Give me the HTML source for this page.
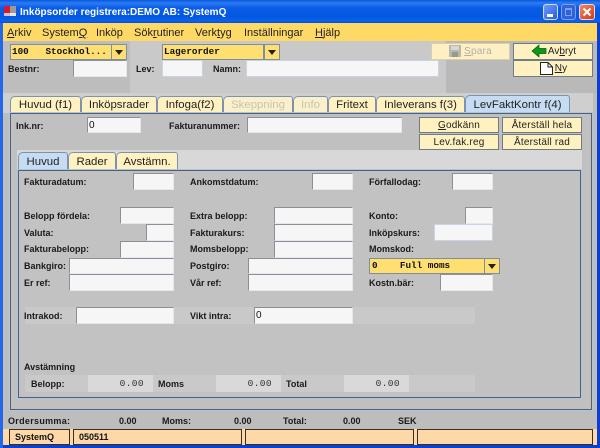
<!DOCTYPE html>
<html><head><meta charset="utf-8">
<style>
html,body{margin:0;padding:0;background:#c0c0c0}
#w{position:relative;width:600px;height:448px;overflow:hidden;background:#bdbdbd;font-family:"Liberation Sans",sans-serif;color:#111}
#w div,#w svg{position:absolute}
.l{font-size:9px;font-weight:bold;line-height:12px;white-space:nowrap;color:#1a1a1a}
.i{background:#f6f6f6;border:1px solid #a9b1bd;border-top-color:#8a8f98;border-left-color:#8a8f98;border-right-color:#e4e8ee;border-bottom-color:#e4e8ee;box-sizing:border-box;font-size:10px;line-height:16px;padding-left:1px}
.b{background:#fff2c0;border:1px solid #6f7c88;box-sizing:border-box;font-size:10px;line-height:15px;text-align:center;white-space:nowrap;color:#222;letter-spacing:.2px}
.t{background:#fff2c0;border:1px solid #7d93ad;border-bottom:none;border-radius:5px 3px 0 0;box-sizing:border-box;font-size:11.4px;line-height:17px;text-align:center;white-space:nowrap;color:#222}
.a{background:#c6dcf2}
.d{color:#c8c4ae}
.c{background:#ffdf70;border:1px solid #7f8da0;box-sizing:border-box;font-family:"Liberation Mono",monospace;font-weight:bold;font-size:9.3px;line-height:14px;padding-left:1px;white-space:pre;color:#111}
.cb{background:#ffdf70;border:1px solid #7f8da0;box-sizing:border-box}
.cb:after{content:"";position:absolute;left:3px;top:5px;border:4px solid transparent;border-top:5px solid #222;border-bottom:none}
.v{background:#d9d9d9;font-family:"Liberation Mono",monospace;font-size:9.5px;line-height:17px;text-align:right;padding-right:9px;box-sizing:border-box;color:#333;letter-spacing:.4px}
.s{background:#ffd8a8;border:1px solid #3a3020;box-sizing:border-box;font-size:9px;font-weight:bold;line-height:14px;padding-left:5px}
.m{top:26px;font-size:11px;line-height:14px;color:#222;white-space:nowrap}
u{text-decoration:underline}
</style></head><body>
<div id="w">
<!-- window frame -->
<div style="left:0;top:0;width:600px;height:448px;background:#0a3fd0"></div>
<div style="left:0;top:0;width:3px;height:448px;background:#2468ea"></div>
<div style="left:0;top:0;width:600px;height:23px;background:linear-gradient(#0a55dc 0,#2a7cf2 3px,#0a5ce6 8px,#0458e0 17px,#0a62ee 21px,#0650d0 23px)"></div>
<div style="left:3px;top:23px;width:594px;height:422px;background:#bdbdbd"></div>
<!-- title -->
<div style="left:4px;top:6px;width:6px;height:7px;background:#d81830"></div>
<div style="left:10px;top:6px;width:6px;height:7px;background:#9a9a9a"></div>
<div style="left:4px;top:13px;width:6px;height:3px;background:#c8c8c8"></div>
<div style="left:10px;top:13px;width:6px;height:3px;background:#e6e6e6"></div>
<div style="left:20px;top:6px;font-size:10px;font-weight:bold;line-height:14px;color:#fff;white-space:nowrap">Inköpsorder registrera:DEMO AB: SystemQ</div>
<!-- title buttons -->
<div style="left:543px;top:4px;width:15px;height:16px;box-sizing:border-box;border:1px solid #d0dcf8;border-radius:3px;background:linear-gradient(135deg,#6f9cf4,#2a5cdc)"></div>
<div style="left:547px;top:14px;width:6px;height:3px;background:#fff"></div>
<div style="left:561px;top:4px;width:15px;height:16px;box-sizing:border-box;border:1px solid #7fa0ec;border-radius:3px;background:#2f62dc"></div>
<div style="left:565px;top:8px;width:7px;height:8px;box-sizing:border-box;border:1px solid #7fa0ec;border-top-width:2px"></div>
<div style="left:579px;top:4px;width:16px;height:16px;box-sizing:border-box;border:1px solid #f0d8d0;border-radius:3px;background:linear-gradient(135deg,#ef8a68,#d03a18)"></div>
<svg style="left:579px;top:4px" width="16" height="16"><path d="M4.5 4.5L11.5 11.5M11.5 4.5L4.5 11.5" stroke="#fff" stroke-width="2"/></svg>
<!-- menu -->
<div style="left:3px;top:23px;width:594px;height:18px;background:#ffd966"></div>
<div class="m" style="left:7px"><u>A</u>rkiv</div>
<div class="m" style="left:42px">System<u>Q</u></div>
<div class="m" style="left:96px">Inköp</div>
<div class="m" style="left:134px">Sök<u>r</u>utiner</div>
<div class="m" style="left:195px">Verk<u>t</u>yg</div>
<div class="m" style="left:244px">Inställningar</div>
<div class="m" style="left:315px"><u>H</u>jälp</div>
<!-- top area -->
<div style="left:130px;top:41px;width:316px;height:52px;background:#c9c9c9"></div>
<div style="left:446px;top:41px;width:151px;height:52px;background:#b9b9b9"></div>
<div class="c" style="left:10px;top:44px;width:102px;height:16px">100   Stockhol...</div>
<div class="cb" style="left:111px;top:44px;width:16px;height:16px"></div>
<div class="c" style="left:162px;top:44px;width:102px;height:16px">Lagerorder</div>
<div class="cb" style="left:264px;top:44px;width:16px;height:16px"></div>
<div class="l" style="left:8px;top:63px">Bestnr:</div>
<div class="i" style="left:73px;top:60px;width:54px;height:17px"></div>
<div class="l" style="left:136px;top:63px">Lev:</div>
<div class="i" style="left:162px;top:60px;width:41px;height:17px;border-color:#c8d4e4"></div>
<div class="l" style="left:213px;top:63px">Namn:</div>
<div class="i" style="left:246px;top:60px;width:193px;height:17px;border-color:#c8d4e4"></div>
<div class="b d" style="left:431px;top:43px;width:79px;height:17px;background:#fff0c4;border-color:#d8d0ac;padding-left:15px;color:#b0b0a8"><u>S</u>para</div>
<svg style="left:449px;top:45px" width="12" height="12"><rect width="12" height="12" fill="#b8b8b0"/><rect x="2" y="1" width="8" height="4" fill="#d8d8d0"/><rect x="3" y="7" width="6" height="5" fill="#989890"/></svg>
<div class="b" style="left:513px;top:43px;width:80px;height:17px;padding-left:18px;letter-spacing:0"><span>Av<u>b</u>ryt</span></div>
<svg style="left:531px;top:44px" width="16" height="14"><path d="M1 7L8 1V4.5H15V9.5H8V13Z" fill="#0a9a18" stroke="#045c0c" stroke-width=".7"/></svg>
<div class="b" style="left:513px;top:60px;width:80px;height:17px;padding-left:16px"><u>N</u>y</div>
<svg style="left:540px;top:62px" width="13" height="13"><path d="M.5.5H8L12.5 5V12.5H.5Z" fill="#fff" stroke="#222"/><path d="M8 .5V5H12.5" fill="none" stroke="#222"/></svg>
<!-- outer tabs -->
<div style="left:3px;top:93px;width:590px;height:20px;background:#cfcfcf"></div>
<div class="t" style="left:10px;top:96px;width:71px;height:17px">Huvud (f1)</div>
<div class="t" style="left:81px;top:96px;width:76px;height:17px">Inköpsrader</div>
<div class="t" style="left:157px;top:96px;width:66px;height:17px">Infoga(f2)</div>
<div class="t d" style="left:223px;top:96px;width:70px;height:17px;background:#fbf0cc">Skeppning</div>
<div class="t d" style="left:293px;top:96px;width:35px;height:17px;background:#fbf0cc">Info</div>
<div class="t" style="left:328px;top:96px;width:48px;height:17px">Fritext</div>
<div class="t" style="left:376px;top:96px;width:89px;height:17px">Inleverans f(3)</div>
<div class="t a" style="left:465px;top:95px;width:105px;height:18px;line-height:19px">LevFaktKontr f(4)</div>
<!-- outer panel -->
<div style="left:9px;top:112px;width:584px;height:299px;box-sizing:border-box;border:1px solid #a9c6e6;background:#c0c0c0"></div>
<div style="left:10px;top:113px;width:582px;height:297px;box-sizing:border-box;border:1px solid #55606c;background:#c0c0c0"></div>
<!-- inner tab band -->
<div style="left:17px;top:150px;width:565px;height:20px;background:#d8d8d8"></div>
<div class="l" style="left:16px;top:120px">Ink.nr:</div>
<div class="i" style="left:87px;top:117px;width:54px;height:16px;line-height:15px">0</div>
<div class="l" style="left:169px;top:120px">Fakturanummer:</div>
<div class="i" style="left:247px;top:117px;width:155px;height:16px"></div>
<div class="b" style="left:419px;top:117px;width:80px;height:16px">
<u>G</u>odkänn</div>
<div class="b" style="left:502px;top:117px;width:80px;height:16px">Återställ hela</div>
<div class="b" style="left:419px;top:134px;width:80px;height:16px">Lev.fak.reg</div>
<div class="b" style="left:502px;top:134px;width:80px;height:16px">Återställ rad</div>
<!-- inner tabs -->
<div class="t a" style="left:18px;top:152px;width:50px;height:18px;line-height:18px">Huvud</div>
<div class="t" style="left:68px;top:152px;width:48px;height:18px;line-height:18px">Rader</div>
<div class="t" style="left:116px;top:152px;width:62px;height:18px;line-height:18px">Avstämn.</div>
<!-- inner panel -->
<div style="left:17px;top:169px;width:565px;height:230px;box-sizing:border-box;border:1px solid #a9c6e6;background:#c0c0c0"></div>
<div style="left:18px;top:170px;width:563px;height:228px;box-sizing:border-box;border:1px solid #55606c;background:#c2c2c2"></div>
<!-- fields -->
<div class="l" style="left:24px;top:176px">Fakturadatum:</div><div class="i" style="left:133px;top:173px;width:41px;height:17px"></div>
<div class="l" style="left:190px;top:176px">Ankomstdatum:</div><div class="i" style="left:312px;top:173px;width:41px;height:17px"></div>
<div class="l" style="left:369px;top:176px">Förfallodag:</div><div class="i" style="left:452px;top:173px;width:41px;height:17px"></div>

<div class="l" style="left:24px;top:210px">Belopp fördela:</div><div class="i" style="left:120px;top:207px;width:54px;height:17px"></div>
<div class="l" style="left:190px;top:210px">Extra belopp:</div><div class="i" style="left:274px;top:207px;width:79px;height:17px"></div>
<div class="l" style="left:369px;top:210px">Konto:</div><div class="i" style="left:465px;top:207px;width:28px;height:17px"></div>

<div class="l" style="left:24px;top:227px">Valuta:</div><div class="i" style="left:146px;top:224px;width:28px;height:17px"></div>
<div class="l" style="left:190px;top:227px">Fakturakurs:</div><div class="i" style="left:274px;top:224px;width:79px;height:17px"></div>
<div class="l" style="left:369px;top:227px">Inköpskurs:</div><div class="i" style="left:434px;top:224px;width:59px;height:17px;border-color:#c8d4e4"></div>

<div class="l" style="left:24px;top:243px">Fakturabelopp:</div><div class="i" style="left:120px;top:241px;width:54px;height:17px"></div>
<div class="l" style="left:190px;top:243px">Momsbelopp:</div><div class="i" style="left:274px;top:241px;width:79px;height:17px"></div>
<div class="l" style="left:369px;top:243px">Momskod:</div>

<div class="l" style="left:24px;top:260px">Bankgiro:</div><div class="i" style="left:69px;top:258px;width:105px;height:16px"></div>
<div class="l" style="left:190px;top:260px">Postgiro:</div><div class="i" style="left:248px;top:258px;width:105px;height:16px"></div>
<div class="c" style="left:369px;top:258px;width:116px;height:16px;padding-left:2px">0    Full moms</div><div class="cb" style="left:484px;top:258px;width:16px;height:16px"></div>

<div class="l" style="left:24px;top:277px">Er ref:</div><div class="i" style="left:69px;top:274px;width:105px;height:17px"></div>
<div class="l" style="left:190px;top:277px">Vår ref:</div><div class="i" style="left:248px;top:274px;width:105px;height:17px"></div>
<div class="l" style="left:369px;top:277px">Kostn.bär:</div><div class="i" style="left:440px;top:274px;width:53px;height:17px"></div>

<div style="left:25px;top:307px;width:450px;height:17px;background:#c9c9c9"></div>
<div class="l" style="left:24px;top:310px">Intrakod:</div><div class="i" style="left:76px;top:307px;width:98px;height:17px"></div>
<div class="l" style="left:190px;top:310px">Vikt intra:</div><div class="i" style="left:254px;top:307px;width:99px;height:17px">0</div>

<div class="l" style="left:24px;top:361px">Avstämning</div>
<div style="left:25px;top:375px;width:450px;height:17px;background:#c9c9c9"></div>
<div class="l" style="left:31px;top:378px">Belopp:</div><div class="v" style="left:88px;top:375px;width:65px;height:17px">0.00</div>
<div class="l" style="left:158px;top:378px">Moms</div><div class="v" style="left:216px;top:375px;width:65px;height:17px">0.00</div>
<div class="l" style="left:286px;top:378px">Total</div><div class="v" style="left:344px;top:375px;width:65px;height:17px">0.00</div>
<!-- footer -->
<div class="l" style="left:8px;top:415px;letter-spacing:.3px">Ordersumma:</div>
<div class="l" style="left:119px;top:415px">0.00</div>
<div class="l" style="left:162px;top:415px">Moms:</div>
<div class="l" style="left:234px;top:415px">0.00</div>
<div class="l" style="left:283px;top:415px">Total:</div>
<div class="l" style="left:343px;top:415px">0.00</div>
<div class="l" style="left:398px;top:415px">SEK</div>
<div style="left:3px;top:429px;width:594px;height:16px;background:#ffd8a8"></div>
<div class="s" style="left:9px;top:429px;width:61px;height:16px">SystemQ</div>
<div class="s" style="left:73px;top:429px;width:169px;height:16px">050511</div>
<div class="s" style="left:245px;top:429px;width:169px;height:16px"></div>
<div class="s" style="left:417px;top:429px;width:176px;height:16px"></div>
</div>
</body></html>
